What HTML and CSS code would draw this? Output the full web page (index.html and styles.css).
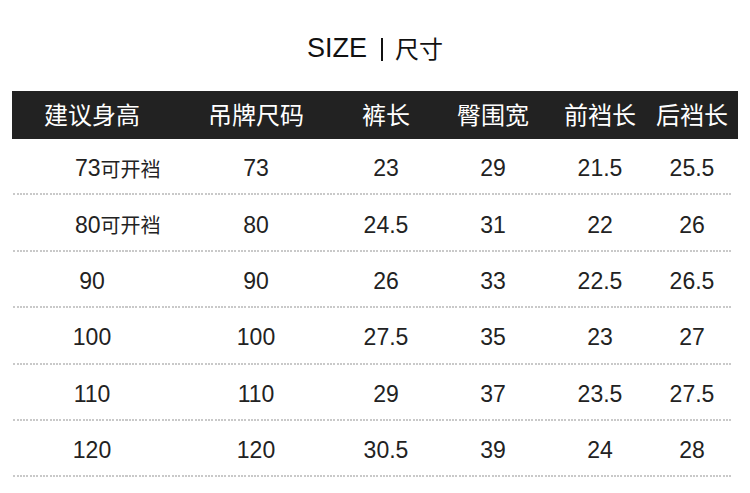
FILE: index.html
```html
<!DOCTYPE html>
<html lang="zh">
<head>
<meta charset="utf-8">
<title>SIZE | 尺寸</title>
<link rel="stylesheet" href="styles.css">
</head>
<body>
<div class="page">
  <h1 class="title"><span class="en">SIZE</span><span class="bar"></span><span class="cn">尺寸</span></h1>
  <div class="table">
    <div class="head">
      <div class="cell">建议身高</div>
      <div class="cell">吊牌尺码</div>
      <div class="cell">裤长</div>
      <div class="cell">臀围宽</div>
      <div class="cell">前裆长</div>
      <div class="cell">后裆长</div>
    </div>
    <div class="row">
      <div class="cell note">73<span class="cjk">可开裆</span></div>
      <div class="cell">73</div><div class="cell">23</div><div class="cell">29</div><div class="cell">21.5</div><div class="cell">25.5</div>
    </div>
    <div class="row">
      <div class="cell note">80<span class="cjk">可开裆</span></div>
      <div class="cell">80</div><div class="cell">24.5</div><div class="cell">31</div><div class="cell">22</div><div class="cell">26</div>
    </div>
    <div class="row">
      <div class="cell">90</div>
      <div class="cell">90</div><div class="cell">26</div><div class="cell">33</div><div class="cell">22.5</div><div class="cell">26.5</div>
    </div>
    <div class="row">
      <div class="cell">100</div>
      <div class="cell">100</div><div class="cell">27.5</div><div class="cell">35</div><div class="cell">23</div><div class="cell">27</div>
    </div>
    <div class="row">
      <div class="cell">110</div>
      <div class="cell">110</div><div class="cell">29</div><div class="cell">37</div><div class="cell">23.5</div><div class="cell">27.5</div>
    </div>
    <div class="row">
      <div class="cell">120</div>
      <div class="cell">120</div><div class="cell">30.5</div><div class="cell">39</div><div class="cell">24</div><div class="cell">28</div>
    </div>
  </div>
</div>
</body>
</html>
```
FILE: styles.css
```css
* { box-sizing: border-box; }
html, body { margin: 0; padding: 0; background: #fff; }
body {
  width: 750px;
  height: 493px;
  overflow: hidden;
  font-family: "Liberation Sans", Arial, "Noto Sans CJK SC", sans-serif;
  color: #222;
}
.page { padding: 0 12px; }
.title {
  margin: 0;
  height: 91px;
  padding-top: 33px;
  display: flex;
  justify-content: center;
  align-items: flex-start;
  font-weight: 400;
  font-size: 27px;
  line-height: 30px;
  color: #111;
}
.title .en { font-family: "Liberation Sans", Arial, sans-serif; }
.title .bar {
  display: inline-block;
  width: 2px;
  height: 23px;
  background: #111;
  margin: 5px 12px 0 14px;
}
.title .cn {
  font-family: "Noto Sans CJK SC", sans-serif;
  font-size: 24px;
  line-height: 30px;
}
.table { width: 726px; }
.head, .row {
  display: grid;
  grid-template-columns: 160px 168px 92px 122px 92px 92px;
}
.head {
  height: 48px;
  background: #222;
  color: #fff;
  font-family: "Noto Sans CJK SC", sans-serif;
  font-size: 24px;
}
.head .cell { padding-bottom: 2px; }
.cell {
  display: flex;
  align-items: center;
  justify-content: center;
  line-height: 1;
  white-space: nowrap;
}
.row {
  height: 56.4px;
  padding-top: 5px;
  padding-bottom: 2px;
  font-size: 23px;
  background-image: repeating-linear-gradient(to right, #c9c9c9 0 2px, transparent 2px 3.3px);
  background-size: 722px 2px;
  background-repeat: no-repeat;
  background-position: -2px 100%;
}
.row:first-of-type { height: 55px; }
.note { justify-content: flex-start; padding-left: 63px; }
.cjk {
  font-family: "Noto Sans CJK SC", sans-serif;
  font-size: 20px;
}
```
